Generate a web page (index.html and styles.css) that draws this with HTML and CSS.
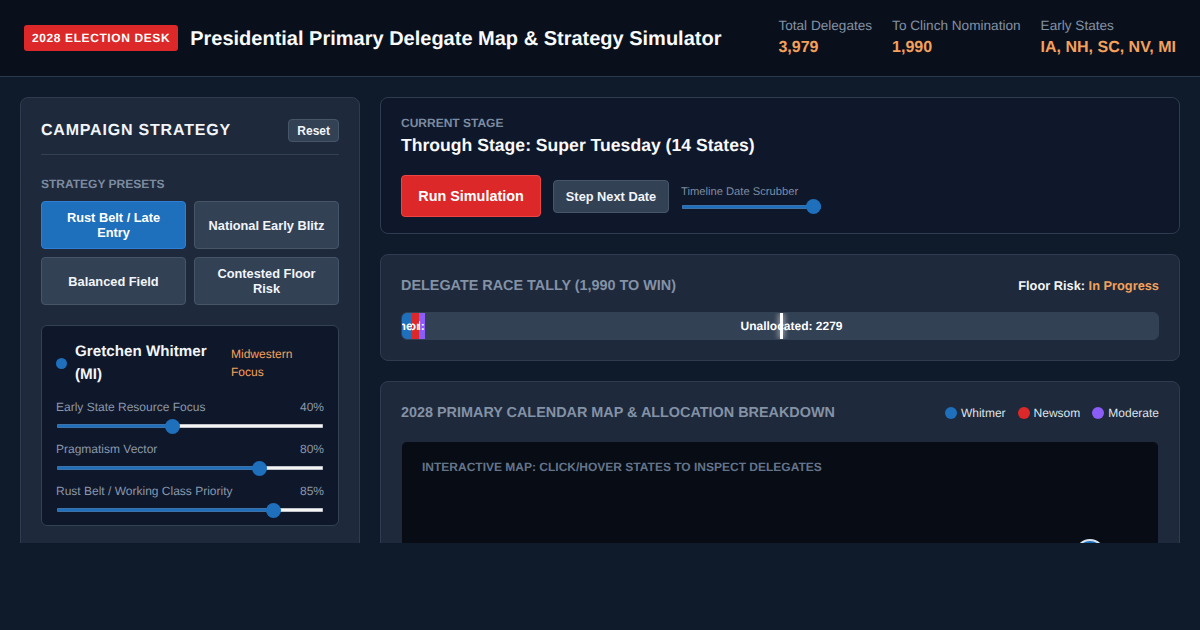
FILE: index.html
```html
<!DOCTYPE html>
<html lang="en">
<head>
<meta charset="utf-8">
<title>Presidential Primary Delegate Map &amp; Strategy Simulator</title>
<link rel="stylesheet" href="styles.css">
</head>
<body>
<header class="topbar">
  <div class="brand">
    <span class="badge">2028 ELECTION DESK</span>
    <h1 class="page-title">Presidential Primary Delegate Map &amp; Strategy Simulator</h1>
  </div>
  <div class="stats">
    <div class="stat"><span class="stat-label">Total Delegates</span><span class="stat-value">3,979</span></div>
    <div class="stat"><span class="stat-label">To Clinch Nomination</span><span class="stat-value">1,990</span></div>
    <div class="stat"><span class="stat-label">Early States</span><span class="stat-value">IA, NH, SC, NV, MI</span></div>
  </div>
</header>
<main class="layout">
  <aside class="card sidebar">
    <div class="side-head">
      <h2 class="side-title">CAMPAIGN STRATEGY</h2>
      <button class="reset">Reset</button>
    </div>
    <div class="section-label">STRATEGY PRESETS</div>
    <div class="presets">
      <button class="preset active">Rust Belt / Late Entry</button>
      <button class="preset">National Early Blitz</button>
      <button class="preset">Balanced Field</button>
      <button class="preset">Contested Floor Risk</button>
    </div>
    <section class="candidate">
      <div class="cand-head">
        <span class="cand-dot"></span>
        <span class="cand-name">Gretchen Whitmer (MI)</span>
        <span class="cand-focus">Midwestern Focus</span>
      </div>
      <div class="slider-row">
        <div class="slider-labels"><span>Early State Resource Focus</span><span>40%</span></div>
        <input class="range" type="range" min="0" max="1000" value="430" style="--fill:43%">
      </div>
      <div class="slider-row">
        <div class="slider-labels"><span>Pragmatism Vector</span><span>80%</span></div>
        <input class="range" type="range" min="0" max="1000" value="775" style="--fill:78%">
      </div>
      <div class="slider-row">
        <div class="slider-labels"><span>Rust Belt / Working Class Priority</span><span>85%</span></div>
        <input class="range" type="range" min="0" max="1000" value="831" style="--fill:83%">
      </div>
    </section>
  </aside>
  <div class="content">
    <section class="card stage">
      <div class="section-label stage-label">CURRENT STAGE</div>
      <div class="stage-title">Through Stage: Super Tuesday (14 States)</div>
      <div class="controls">
        <button class="run">Run Simulation</button>
        <button class="step">Step Next Date</button>
        <div class="scrubber">
          <label class="scrub-label">Timeline Date Scrubber</label>
          <input class="range range-time" type="range" min="0" max="100" value="100" style="--fill:100%">
        </div>
      </div>
    </section>
    <section class="card tally">
      <div class="card-head">
        <h3 class="card-title">DELEGATE RACE TALLY (1,990 TO WIN)</h3>
        <div class="risk">Floor Risk: <span class="risk-val">In Progress</span></div>
      </div>
      <div class="bar">
        <div class="seg seg-w"><span>Whitmer: 167</span></div>
        <div class="seg seg-n"><span>Newsom: 117</span></div>
        <div class="seg seg-m"><span>Mod: 100</span></div>
        <div class="seg seg-u"><span>Unallocated: 2279</span></div>
        <div class="win-mark"></div>
      </div>
    </section>
    <section class="card mapcard">
      <div class="card-head">
        <h3 class="card-title">2028 PRIMARY CALENDAR MAP &amp; ALLOCATION BREAKDOWN</h3>
        <div class="legend">
          <span class="legend-item"><i class="ldot ldot-w"></i>Whitmer</span>
          <span class="legend-item"><i class="ldot ldot-n"></i>Newsom</span>
          <span class="legend-item"><i class="ldot ldot-m"></i>Moderate</span>
        </div>
      </div>
      <div class="map">
        <div class="map-label">INTERACTIVE MAP: CLICK/HOVER STATES TO INSPECT DELEGATES</div>
        <span class="pin"></span>
      </div>
    </section>
  </div>
</main>
</body>
</html>
```
FILE: styles.css
```css
* { box-sizing: border-box; }
html, body { margin: 0; height: 100%; }
body {
  background: #0f1a2b;
  color: #f1f5f9;
  font-family: "Liberation Sans", Arial, sans-serif;
  text-rendering: geometricPrecision;
  overflow: hidden;
}
button { font-family: inherit; cursor: pointer; }
h1, h2, h3 { margin: 0; }

.topbar {
  height: 77px;
  background: #0a101b;
  border-bottom: 1px solid #2a3a4e;
  padding: 0 24px;
  display: flex;
  align-items: center;
  justify-content: space-between;
}
.brand { display: flex; align-items: center; gap: 12px; }
.badge {
  background: #dc2828;
  color: #fff;
  font-size: 12px;
  font-weight: 700;
  letter-spacing: .6px;
  padding: 6px 8px;
  border-radius: 3px;
  line-height: 14px;
}
.page-title { font-size: 20px; font-weight: 700; line-height: 28px; color: #f8fafc; margin-top: 1px; }
.stats { display: flex; gap: 20px; }
.stat { display: flex; flex-direction: column; gap: 3px; }
.stat-label { font-size: 13.6px; line-height: 17px; color: #8291a5; }
.stat-value { font-size: 16px; line-height: 22px; font-weight: 700; color: #f4a15c; }

.layout {
  height: 466px;
  overflow: hidden;
  padding: 20px;
  display: grid;
  grid-template-columns: 340px 800px;
  gap: 20px;
  align-items: start;
}
.card {
  background: #1e293b;
  border: 1px solid #2f3c4f;
  border-radius: 8px;
  padding: 20px;
}
.sidebar { height: 520px; padding-top: 21px; }
.side-head {
  display: flex;
  justify-content: space-between;
  align-items: center;
  padding-bottom: 12px;
  border-bottom: 1px solid #334155;
  margin-bottom: 22px;
}
.side-title { font-size: 16px; font-weight: 700; letter-spacing: .8px; line-height: 22px; padding-top: 1px; color: #f1f5f9; }
.reset {
  background: #334155;
  border: 1px solid #475569;
  color: #f1f5f9;
  border-radius: 4px;
  font-size: 12px;
  font-weight: 700;
  height: 23px;
  padding: 0 8px;
}
.section-label { font-size: 12px; line-height: 14px; font-weight: 700; color: #7d8ba0; margin-bottom: 10px; }
.presets { display: grid; grid-template-columns: 1fr 1fr; gap: 8px; }
.preset {
  background: #334155;
  border: 1px solid #475569;
  color: #f1f5f9;
  border-radius: 4px;
  font-size: 12.8px;
  font-weight: 700;
  line-height: 15px;
  height: 48px;
  padding: 0 12px;
}
.preset.active { background: #1e6fbc; border-color: #2f7fd6; color: #fff; }

.candidate {
  margin-top: 20px;
  height: 201px;
  background: #0f172a;
  border: 1px solid #334155;
  border-radius: 6px;
  padding: 14px;
}
.cand-head { display: flex; align-items: center; height: 46px; margin-bottom: 14px; }
.cand-dot { width: 11px; height: 11px; border-radius: 50%; background: #1e6fbc; margin-right: 8px; flex: none; }
.cand-name { width: 156px; flex: none; font-size: 15.2px; line-height: 23px; font-weight: 700; color: #f1f5f9; }
.cand-focus { font-size: 12px; line-height: 18px; color: #f4a15c; width: 80px; }
.slider-row { height: 42px; }
.slider-labels {
  display: flex;
  justify-content: space-between;
  font-size: 12px;
  line-height: 14px;
  color: #8a97aa;
  margin-bottom: 4px;
}
.range {
  -webkit-appearance: none;
  appearance: none;
  display: block;
  width: 266px;
  height: 16px;
  margin: 0 1px;
  background: transparent;
  --fill: 50%;
}
.range::-webkit-slider-runnable-track {
  height: 4px;
  border-radius: 1px;
  box-shadow: inset 0 0 0 1px rgba(110, 120, 135, .4);
  background: linear-gradient(to right, #1e6fbc var(--fill), #f4f4f4 var(--fill));
}
.range::-webkit-slider-thumb {
  -webkit-appearance: none;
  appearance: none;
  width: 15px;
  height: 15px;
  margin-top: -5.5px;
  border-radius: 50%;
  background: #1e6fbc;
}

.content { display: flex; flex-direction: column; gap: 20px; min-width: 0; }
.stage { background: #0f172a; height: 137px; padding-top: 18px; }
.stage-label { margin-bottom: 5px; }
.stage-title { font-size: 17.6px; line-height: 21px; font-weight: 700; color: #f8fafc; }
.controls { display: flex; align-items: center; gap: 12px; margin-top: 19px; }
.run {
  background: #dc2828;
  border: 1px solid #ef4444;
  color: #fff;
  border-radius: 4px;
  font-size: 14.4px;
  font-weight: 700;
  height: 42px;
  width: 140px;
  padding: 0;
}
.step {
  background: #334155;
  border: 1px solid #475569;
  color: #f1f5f9;
  border-radius: 4px;
  font-size: 12.8px;
  font-weight: 700;
  height: 33px;
  width: 116px;
  padding: 0;
}
.scrubber { display: flex; flex-direction: column; margin-top: 8px; }
.scrub-label { font-size: 11.2px; line-height: 13px; color: #7d8ba0; }
.range-time { width: 139px; margin: 0 0 0 1px; }

.tally { height: 107px; }
.card-head { display: flex; justify-content: space-between; align-items: center; height: 20px; }
.card-title { font-size: 14.4px; line-height: 22px; margin-top: 2px; font-weight: 700; color: #8492a6; }
.risk { font-size: 12.8px; font-weight: 700; color: #f1f5f9; }
.risk-val { color: #f4a15c; }
.bar {
  position: relative;
  display: flex;
  height: 28px;
  margin-top: 17px;
  background: #334155;
  border: 1px solid #334155;
  border-radius: 6px;
  overflow: hidden;
}
.seg {
  display: flex;
  align-items: center;
  justify-content: center;
  overflow: hidden;
  flex: none;
  font-size: 12px;
  font-weight: 700;
  color: #fff;
  white-space: nowrap;
}
.seg-w { background: #1e6fbc; width: 10px; }
.seg-n { background: #dc2828; width: 7px; }
.seg-m { background: #8b5cf6; width: 6px; }
.seg-u { background: #334155; flex: 1; }
.win-mark {
  position: absolute;
  left: 378px;
  top: 0;
  bottom: 0;
  width: 3px;
  background: #fff;
  box-shadow: 0 0 6px #fff;
}
.mapcard { height: 500px; padding-top: 20px; }
.legend { display: flex; gap: 12px; margin-top: 2px; }
.legend-item { display: flex; align-items: center; gap: 4px; font-size: 12px; color: #dde3ea; }
.ldot { width: 12px; height: 12px; border-radius: 50%; display: block; }
.ldot-w { background: #1e6fbc; }
.ldot-n { background: #dc2828; }
.ldot-m { background: #8b5cf6; }
.map {
  position: relative;
  margin-top: 19px;
  height: 400px;
  background: #070c15;
  border: 1px solid #1e293b;
  border-radius: 6px;
  padding: 18px 20px;
}
.map-label { font-size: 12px; line-height: 14px; font-weight: 700; color: #64748b; }
.pin {
  position: absolute;
  left: 673px;
  top: 97px;
  width: 30px;
  height: 30px;
  border-radius: 50%;
  background: #1e6fbc;
  border: 2px solid #dbe4ee;
}
```
